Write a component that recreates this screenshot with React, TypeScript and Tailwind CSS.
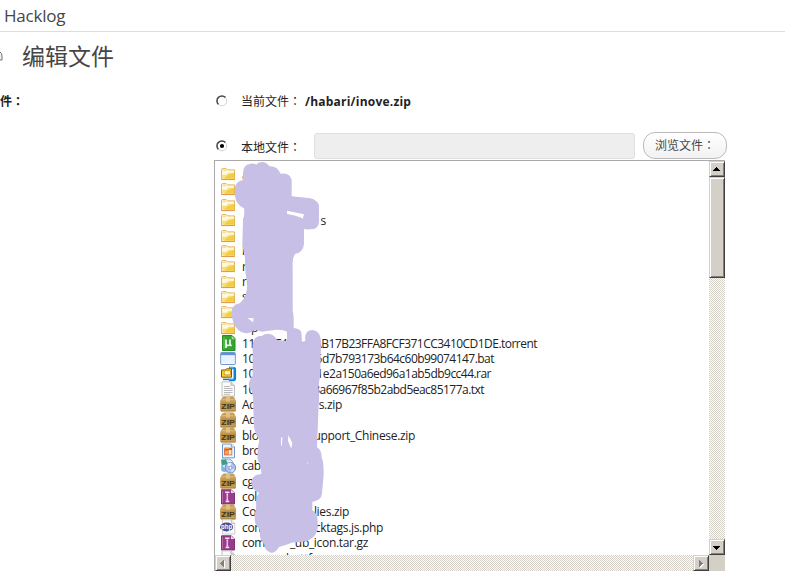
import React from "react";

type Kind = "folder" | "torrent" | "bat" | "rar" | "txt" | "zip" | "img" | "cab" | "gz" | "php" | "doc";

interface Entry {
  kind: Kind;
  head: string;
  mid?: string;
  midX?: number;
  tail?: string;
  end?: number;
  tight?: boolean;
}

// `end` is the right edge of the tail, measured from the start of the name column.
const entries: Entry[] = [
  { kind: "folder", head: "a" },
  { kind: "folder", head: "" },
  { kind: "folder", head: "" },
  { kind: "folder", head: "", tail: "s", end: 84 },
  { kind: "folder", head: "" },
  { kind: "folder", head: "l" },
  { kind: "folder", head: "re" },
  { kind: "folder", head: "re" },
  { kind: "folder", head: "s" },
  { kind: "folder", head: "" },
  { kind: "folder", head: "", mid: "p", midX: 9 },
  { kind: "torrent", head: "112", mid: "F4", midX: 33, tail: "AB17B23FFA8FCF371CC3410CD1DE.torrent", end: 295, tight: true },
  { kind: "bat", head: "102", tail: "5d7b793173b64c60b99074147.bat", end: 252, tight: true },
  { kind: "rar", head: "102", tail: "1e2a150a6ed96a1ab5db9cc44.rar", end: 249, tight: true },
  { kind: "txt", head: "102", tail: "3a66967f85b2abd5eac85177a.txt", end: 242, tight: true },
  { kind: "zip", head: "Ad", tail: "s.zip", end: 100 },
  { kind: "zip", head: "Ad" },
  { kind: "zip", head: "bloc", tail: "upport_Chinese.zip", end: 173 },
  { kind: "img", head: "brow" },
  { kind: "cab", head: "cabi", mid: "x", midX: 46 },
  { kind: "zip", head: "cgi" },
  { kind: "gz", head: "colo" },
  { kind: "zip", head: "Co", tail: "lies.zip", end: 107 },
  { kind: "php", head: "com", tail: "cktags.js.php", end: 141 },
  { kind: "gz", head: "comm", tail: "_ub_icon.tar.gz", end: 126 },
  { kind: "doc", head: "", mid: "com_buttf", midX: 16 },
];

function FileIcon({ kind }: { kind: Kind }) {
  return (
    <svg width="17" height="16" viewBox="0 0 17 16" className="shrink-0">
      {kind === "folder" && (
        <g>
          <path d="M1.5 3.5q0-.9 1-.9h3.8l1.2 1.3h7v9.6h-13z" fill="#fff8dc" stroke="#e3b656" />
          <path d="M2.5 4.2h3.5" stroke="#f2cf70" />
          <path d="M2.2 12.8V8.4h4.5l1.8-1.9h5.4v6.3z" fill="#f8de7c" />
          <path d="M8 9l6-2v5.8H4z" fill="#f0c832" opacity=".8" />
          <path d="M2 7.9h4.5l1.8-1.9H14" fill="none" stroke="#fffbe8" />
          <path d="M1.2 13.6h13.6" stroke="#dd9a58" />
        </g>
      )}
      {kind === "torrent" && (
        <g>
          <path d="M2.5.5h9.5l3 3v12H2.5z" fill="#35a52f" stroke="#258e24" />
          <path d="M11.7.8v3.4h3.2z" fill="#a7df91" />
          <path d="M4 2v12" stroke="#69c862" />
          <path d="M6 13V4.5M6 8.5q0 2 2 2t2-2v-4M10 8.7q0 1.8 1.7 1.8" fill="none" stroke="#fff" strokeWidth="1.6" />
        </g>
      )}
      {kind === "bat" && (
        <g>
          <rect x=".7" y="2.5" width="14.6" height="12" rx=".7" fill="#f6faff" stroke="#6e96cc" />
          <path d="M1 3h14v2.2H1z" fill="#5d91d9" />
          <path d="M2 6h12v7H2z" fill="#eaf2fd" />
        </g>
      )}
      {kind === "rar" && (
        <g>
          <path d="M9 2h4.5q1.3 0 1.3 1.3v9.2q0 1.5-1.5 1.5H9" fill="none" stroke="#197fd1" strokeWidth="2.6" />
          <path d="M10 1.8h4M9 13h4.5" stroke="#6fc5ff" strokeWidth="1" />
          <path d="M1.5 4h4l1-1.2h5v8.4h-10z" fill="#ffd02c" stroke="#7a5b10" />
          <path d="M4.2 4.7h6.3v4.2H4.2z" fill="#fff3a4" stroke="#c68c15" strokeWidth=".8" />
          <path d="M3 13.4h6" stroke="#2870b1" strokeWidth="1.5" />
        </g>
      )}
      {(kind === "txt" || kind === "doc") && (
        <g>
          <path d="M2 .8h9l3.5 3.4v11H2z" fill="#fafafa" stroke="#bfc0c0" />
          <path d="M11 1v3.3h3.2" fill="#ddd" stroke="#bbb" />
          <path d="M4 5.5h6M4 7.5h8.5M4 9.5h8.5M4 11.5h8.5M4 13.3h6" stroke="#b2b2b2" strokeWidth=".9" />
        </g>
      )}
      {kind === "zip" && (
        <g>
          <path d="M2 1.7L4 .6h9l1.5 1.1L16 5v9.4l-1 1H1l-.8-1V5z" fill="#c99f58" />
          <path d="M1.7 3.7h13" stroke="#e0bd7b" />
          <path d="M6 .5h4v5H6z" fill="#dfc184" />
          <path d="M.5 6.5h15.3v6H.5z" fill="#b88f47" />
          <path d="M1 14.9h14.5" stroke="#ab803b" />
          <text x="8.1" y="12.8" textAnchor="middle" textLength="13.5" lengthAdjust="spacingAndGlyphs" className="font-['Liberation_Sans'] text-[7px] font-bold" fill="#45341a">ZIP</text>
        </g>
      )}
      {kind === "img" && (
        <g>
          <path d="M2.5 1h9l3 3v10.8h-12z" fill="#edf4fc" stroke="#709bd0" />
          <path d="M11.3 1v3h3" fill="#fff" stroke="#7b9fc7" />
          <path d="M4.2 4.8h8v7.5h-8z" fill="#d4562a" />
          <path d="M4.5 5.3h5" stroke="#f29d45" strokeWidth="1.5" />
          <path d="M5 7.5h3v4H5z" fill="#f3a458" />
          <path d="M8.5 7h3v4.6h-3z" fill="#ffe6b4" />
        </g>
      )}
      {kind === "cab" && (
        <g>
          <path d="M2 1h8l3 3v9H2z" fill="#d6e8f9" stroke="#8fadc9" />
          <path d="M1 2.2l5-1 2 5-6 1z" fill="#419e83" />
          <path d="M1.5 7l4 4v3.7L1.5 12z" fill="#7ab7e3" />
          <circle cx="10.4" cy="9.8" r="5.2" fill="#b0bdee" stroke="#668dd0" />
          <path d="M10.4 9.8L7 6.2q2-2 4.5-1.2z" fill="#e8f6fb" />
          <path d="M10.4 9.8l4.3 1.8q-1.2 2.5-3.3 2.8z" fill="#cde5fc" />
          <circle cx="10.4" cy="9.8" r="1.6" fill="#fff" stroke="#8398c9" />
        </g>
      )}
      {kind === "gz" && (
        <g>
          <path d="M1.5.8h9.8L14.5 4v11h-13z" fill="#983b8a" stroke="#803477" />
          <path d="M11 .7V4h3.5z" fill="#f3dced" />
          <path d="M2.5 2v12" stroke="#b768a9" />
          <path d="M5 3.2h4.6" stroke="#f7e8f4" strokeWidth="1.4" />
          <path d="M7.3 3v9" stroke="#f7e8f4" strokeWidth="1.6" strokeDasharray="1.6 .5" />
          <path d="M5.6 12.4h3.6" stroke="#f7e8f4" strokeWidth="1.6" />
        </g>
      )}
      {kind === "php" && (
        <g>
          <path d="M2.5.8h8.8l3.5 3.5V15H2.5z" fill="#f8f9fa" stroke="#c9cdd2" />
          <path d="M11.3 1v3.5h3.2" fill="#e7eaed" stroke="#bec3c9" />
          <ellipse cx="6.6" cy="8" rx="6.6" ry="4.4" fill="#405096" />
          <text x="6.6" y="10.3" textAnchor="middle" textLength="11" lengthAdjust="spacingAndGlyphs" className="font-['Liberation_Sans'] text-[7.5px] font-bold" fill="#fff">php</text>
        </g>
      )}
    </svg>
  );
}

function FileRow({ entry }: { entry: Entry }) {
  return (
    <li className="flex h-[15.37px] shrink-0 items-center gap-[5px]">
      <FileIcon kind={entry.kind} />
      <span className="grid w-[320px] whitespace-pre text-[12px] leading-[15px] tracking-[-0.32px]">
        <span className="col-start-1 row-start-1">{entry.head}</span>
        {entry.mid && (
          <span className="col-start-1 row-start-1" style={{ paddingLeft: entry.midX }}>{entry.mid}</span>
        )}
        {entry.tail && (
          <span
            className={`col-start-1 row-start-1 text-right ${entry.tight ? "tracking-[-0.53px]" : ""}`}
            style={{ width: entry.end }}
          >
            {entry.tail}
          </span>
        )}
      </span>
    </li>
  );
}

const arrows = {
  up: "M4 9h7v-1h-1v-1h-1v-1h-1v-1h-1v1h-1v1h-1v1h-1z",
  down: "M4 6h7v1h-1v1h-1v1h-1v1h-1v-1h-1v-1h-1v-1h-1z",
  left: "M9 4v7h-1v-1h-1v-1h-1v-1h-1v-1h1v-1h1v-1h1v-1z",
  right: "M6 4v7h1v-1h1v-1h1v-1h1v-1h-1v-1h-1v-1h-1v-1z",
};

const bevel =
  "bg-[#d4d0c8] border border-l-[#d4d0c8] border-t-[#d4d0c8] border-r-[#404040] border-b-[#404040] shadow-[inset_1px_1px_0_#fff,inset_-1px_-1px_0_#808080]";

function ScrollButton({ dir, disabled }: { dir: keyof typeof arrows; disabled?: boolean }) {
  return (
    <span className={`block size-4 shrink-0 ${bevel}`}>
      <svg width="14" height="14" viewBox="1 0 14 14" shapeRendering="crispEdges">
        {disabled && <path d={arrows[dir]} fill="#fff" transform="translate(1 1)" />}
        <path d={arrows[dir]} fill={disabled ? "#808080" : "#000"} />
      </svg>
    </span>
  );
}

const track =
  "bg-[conic-gradient(#fff_25%,#d4d0c8_0_50%,#fff_0_75%,#d4d0c8_0)] bg-[length:2px_2px]";

function Radio({ checked }: { checked?: boolean }) {
  return (
    <svg width="12" height="12" viewBox="0 0 12 12" className="shrink-0" role="radio" aria-checked={!!checked}>
      <circle cx="6" cy="6" r="4.8" fill="#fff" stroke="#d7d4ca" />
      <path d="M2.4 9.4A4.8 4.8 0 0 1 9.4 2.4" fill="none" stroke="#4a4a4a" strokeWidth="1.5" />
      {checked && <circle cx="6" cy="6" r="2.1" fill="#000" />}
    </svg>
  );
}

function Scribble() {
  return (
    <svg className="pointer-events-none absolute left-[-5px] top-[-3px]" width="140" height="400" viewBox="0 0 420 1200" fill="#c7bfe6">
      <path
        fillRule="evenodd"
        d="M99 45Q99 20 121 17Q133 16 139 20Q144 12 158 12Q172 14 178 25Q201 23 212 47Q240 42 245 66L245 115L301 121Q326 128 327 145V191Q326 214 300 214Q287 215 282 212V258Q279 284 255 288Q246 301 248 325V460Q252 468 251 510Q269 511 274 523L276 551L286 549Q282 516 308 516Q330 518 333 548L331 645L325 690Q329 710 326 740L321 868Q335 875 335 900Q341 907 341 950L336 1006Q334 1029 307 1031V1057Q323 1066 323 1088V1109Q318 1148 270 1152Q243 1152 236 1158L207 1167Q196 1186 184 1184Q164 1180 163 1158Q148 1150 149 1114Q133 1100 134 1080V1068Q140 1055 138 1032Q141 1015 147 1004Q124 995 124 972Q125 950 154 948Q153 920 144 907Q139 886 148 845Q130 825 131 780L129 716Q126 695 118 690Q112 675 128 652L128 560Q132 532 155 534Q166 526 179 528Q194 531 200 545L231 549V521Q220 514 199 515L154 521Q133 511 126 521Q102 533 85 516Q66 499 65 465Q64 440 89 436Q110 421 112 380Q104 340 105 300L97 262L99 184Q105 167 102 151Q77 139 75 113V87Q79 70 98 67ZM231 158L282 169L278 182Q267 174 231 168ZM113 480L131 481L129 493ZM235 831L247 855L244 872L234 850ZM213 838L217 839L216 864L213 861ZM293 912L295 915L292 919Z"
      />
    </svg>
  );
}

// The TC face sets the full-width colon in the middle of its cell.
function Label({ text }: { text: string }) {
  return (
    <>
      {text}
      <span className="font-['Noto_Sans_CJK_TC',sans-serif]" lang="zh-TW">：</span>
    </>
  );
}

export default function App() {
  return (
    <main className="h-[579px] w-[785px] overflow-hidden bg-white font-['Open_Sans','Noto_Sans_CJK_SC',sans-serif] text-[12px] text-[#222]">
      <header className="flex h-8 items-center border-b border-[#ddd] pl-1 text-[17px] tracking-[-0.22px] text-[#464646]">
        Hacklog
      </header>
      <div className="flex h-[51px] items-start">
        <svg width="3" height="14" viewBox="0 0 3 14" className="mt-[17px]">
          <path d="M0 3q2 1 2 4v4H0" fill="#eee" stroke="#777" />
        </svg>
        <h1 className="ml-[19px] mt-[6px] font-['Noto_Sans_CJK_SC',sans-serif] text-[23px] leading-[34px] text-[#464646]">编辑文件</h1>
      </div>
      <div className="flex">
        <div className="w-[214px] shrink-0 pt-[9px] font-bold leading-[18px]"><Label text="件" /></div>
        <div className="w-[520px]">
          <div className="flex h-[36px] items-center pl-[2px]">
            <Radio />
            <span className="ml-[13px] mt-px w-[64px] whitespace-nowrap"><Label text="当前文件" /></span>
            <b className="mt-px tracking-[0.22px]">/habari/inove.zip</b>
          </div>
          <div className="mt-[13px] flex h-[28px] items-center pl-[2px]">
            <Radio checked />
            <span className="ml-[13px] mt-[3px] w-[73px] whitespace-nowrap"><Label text="本地文件" /></span>
            <span className="h-[26px] w-[321px] rounded-[3px] border border-[#dfdfdf] bg-[#eee]" />
            <button className="-mt-px ml-[8px] h-[27px] w-[84px] whitespace-nowrap rounded-[12px] border border-[#bbb] bg-linear-to-b from-white to-[#f2f2f2] pl-[11px] text-left text-[12px] text-[#464646]">
              <Label text="浏览文件" />
            </button>
          </div>
          <section className="relative h-[411px] w-[511px] border-l border-t border-[#aaa]">
            <div className="flex h-[394px]">
              <ul className="flex w-[494px] flex-col overflow-hidden pl-[5px] pt-[5.4px]">
                {entries.map((entry, i) => (
                  <FileRow key={i} entry={entry} />
                ))}
              </ul>
              <div className={`flex w-4 flex-col ${track}`}>
                <ScrollButton dir="up" />
                <span className={`h-[101px] ${bevel}`} />
                <span className="flex-1" />
                <ScrollButton dir="down" />
              </div>
            </div>
            <div className="flex h-4">
              <div className={`flex w-[494px] justify-between ${track}`}>
                <ScrollButton dir="left" disabled />
                <ScrollButton dir="right" disabled />
              </div>
              <span className="size-4 bg-[#d4d0c8]" />
            </div>
            <Scribble />
          </section>
        </div>
      </div>
    </main>
  );
}
